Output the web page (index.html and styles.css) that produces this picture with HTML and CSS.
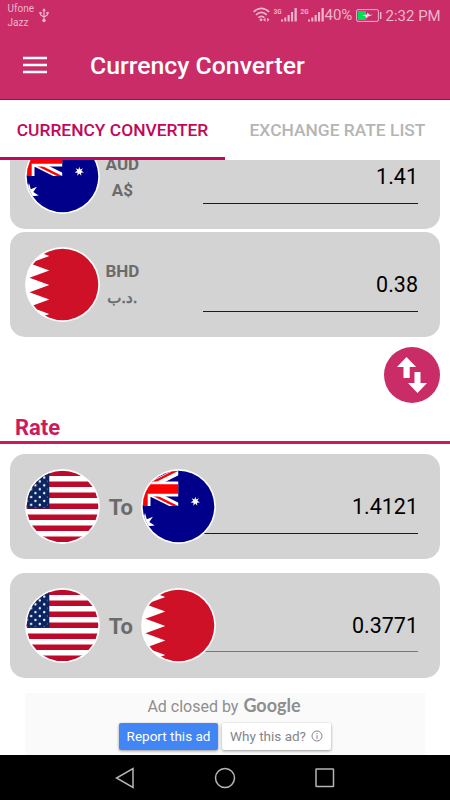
FILE: index.html
```html
<!DOCTYPE html>
<html lang="en">
<head>
    <meta charset="UTF-8">
    <meta name="viewport" content="width=device-width, initial-scale=1.0">
    <title>Currency Converter</title>
    <link rel="stylesheet" href="styles.css">
</head>
<body>
    <!-- flags, used more than once -->
    <svg class="defs" width="0" height="0">
        <defs>
            <clipPath id="round"><circle cx="37.5" cy="37.5" r="35.8"/></clipPath>
            <clipPath id="canton"><rect x="0" y="2" width="37.2" height="35"/></clipPath>
            <pattern id="stars" x="17" y="6.6" width="8.7" height="7.8" patternUnits="userSpaceOnUse">
                <circle cx="2.2" cy="1.95" r="1.15" fill="#fff"/>
                <circle cx="6.55" cy="5.85" r="1.15" fill="#fff"/>
            </pattern>
            <symbol id="us" viewBox="0 0 75 75">
                <circle cx="37.5" cy="37.5" r="37.4" fill="#fff"/>
                <g clip-path="url(#round)">
                    <path d="M0 4.25h75M0 15.25h75M0 26.25h75M0 37.25h75M0 48.25h75M0 59.25h75M0 70.25h75" stroke="#bd0a2b" stroke-width="5.5"/>
                    <rect width="24.3" height="39.6" fill="#0a2560"/>
                    <rect width="22.5" height="39" fill="url(#stars)"/>
                </g>
            </symbol>
            <symbol id="au" viewBox="0 0 75 75">
                <circle cx="37.5" cy="37.5" r="37.4" fill="#fff"/>
                <g clip-path="url(#round)">
                    <rect width="75" height="75" fill="#00008b"/>
                    <g clip-path="url(#canton)">
                        <path d="M2 20L39 1.5M2 20L39 38.5" stroke="#fff" stroke-width="7"/>
                        <path d="M2 18.8L39 .3M2 21.3L39 39.8" stroke="#f00" stroke-width="2.4" transform="translate(0 -.6)"/>
                        <path d="M0 20h38M2 0v38" stroke="#fff" stroke-width="15"/>
                        <path d="M0 20h38M2 0v38" stroke="#f00" stroke-width="9.4"/>
                    </g>
                    <path d="M4.5 43.5l1.8 6.2 6.1-2.6-3.6 5.2 5.4 3.6-6.3.8.8 6.5-4.2-5-4.2 5 .8-6.5-6.3-.8 5.4-3.6-3.6-5.2 6.1 2.6z" fill="#fff" transform="translate(-.5 .6)"/>
                    <path d="M54.3 27.7l.9 2.8 2.7-1.2-1.5 2.5 2.6 1.6-3 .4.3 3-2-2.2-2 2.2.3-3-3-.4 2.6-1.6-1.5-2.5 2.7 1.2z" fill="#fff"/>
                </g>
            </symbol>
            <symbol id="bh" viewBox="0 0 75 75">
                <circle cx="37.5" cy="37.5" r="37.4" fill="#fff"/>
                <path clip-path="url(#round)" d="M75 0H24.3L4.5 1.7 24.3 9 4.5 16.3l19.8 7.2-19.8 7.3L24.3 38 4.5 45.3l19.8 7.2-19.8 7.3L24.3 67 4.5 74.3 24.3 75H75z" fill="#ce1126"/>
            </symbol>
        </defs>
    </svg>

    <header>
        <div class="status">
            <div class="carriers">Ufone<br>Jazz</div>
            <svg class="usb" width="10" height="15" viewBox="0 0 10 15" fill="none" stroke="#eeb5cb" stroke-width="1.2">
                <path d="M5 2v10M1.5 4.5v2.2L5 9.2l3.5-2.5V4.5"/>
                <path d="M5 0L3.2 3h3.6zM.3 4h2.4v1.8H.3zM7.3 4h2.4v1.8H7.3z" fill="#eeb5cb" stroke="none"/>
                <circle cx="5" cy="12.5" r="1.7" fill="#eeb5cb" stroke="none"/>
            </svg>
            <svg class="signals" width="72" height="15" viewBox="0 0 72 15">
                <g fill="none" stroke="#eeb5cb" stroke-width="1.7">
                    <path d="M.6 4.8q7.4-7 15.6 0M3 7.8q5.4-4.7 10.8 0M5.4 10.7q3-2.7 6 0"/>
                </g>
                <circle cx="8" cy="12.8" r="1.4" fill="#eeb5cb"/>
                <path d="M10 12.8l2.5-2v4zM16.5 12.8l-2.5-2v4z" fill="#eeb5cb"/>
                <path d="M28 12.5h2v2h-2zM31.3 10.5h2v4h-2zM34.6 8h2.1v6.500h-2.100zM38 5h2.100v9.500H38zM41.500 1h2.300v13.500h-2.300zM55 12.500h2v2h-2zM58.300 10.500h2v4h-2zM61.600 8h2.100v6.500h-2.100zM65 5h2.100v9.500H65zM68.500 1h2.300v13.500h-2.300z" fill="#eeb5cb"/>
                <text x="20.5" y="7" textLength="8" lengthAdjust="spacingAndGlyphs">3G</text>
                <text x="47.5" y="7" textLength="8" lengthAdjust="spacingAndGlyphs">2G</text>
            </svg>
            <span class="percent">40%</span>
            <svg class="battery" width="26" height="13" viewBox="0 0 26 13">
                <rect x=".6" y=".6" width="21.8" height="11.8" rx="1.5" fill="none" stroke="#eeb5cb"/>
                <rect x="2" y="2" width="8" height="9" fill="#00dc55"/>
                <path d="M6 6l5-.5.5-2 2 2.3H17l-5.500 2-.5 2-1.500-2.300z" fill="#f7dfe8"/>
                <path d="M24.7 3v7" stroke="#eeb5cb" stroke-width="1.5"/>
            </svg>
            <span class="clock">2:32 PM</span>
        </div>
        <div class="toolbar">
            <svg width="24" height="18" viewBox="0 0 24 18"><path d="M0 2h24M0 9h24M0 16h24" stroke="#fff" stroke-width="2.5"/></svg>
            <h1>Currency Converter</h1>
        </div>
    </header>

    <nav>
        <a class="tab active"><span>CURRENCY CONVERTER</span></a>
        <a class="tab"><span>EXCHANGE RATE LIST</span></a>
    </nav>

    <main>
        <div class="card first">
            <svg class="flag"><use href="#au"/></svg>
            <div class="code">AUD<br>A$</div>
            <div class="value">1.41</div>
        </div>
        <div class="card second">
            <svg class="flag"><use href="#bh"/></svg>
            <div class="code">BHD<br><span class="arabic" dir="rtl">.د.ب</span></div>
            <div class="value">0.38</div>
        </div>
        <button class="swap">
            <svg width="30" height="37" viewBox="0 0 30 37" fill="#fff">
                <path d="M9.5 0l9.7 10h-6.5v11H6.5V10H0z"/>
                <path d="M17.5 15h6v11H30l-9.5 10L11 26h6.5z"/>
            </svg>
        </button>
        <h2>Rate</h2>
        <div class="card rate">
            <svg class="flag"><use href="#us"/></svg>
            <div class="to">To</div>
            <svg class="flag target"><use href="#au"/></svg>
            <div class="value">1.4121</div>
        </div>
        <div class="card rate last">
            <svg class="flag"><use href="#us"/></svg>
            <div class="to">To</div>
            <svg class="flag target"><use href="#bh"/></svg>
            <div class="value">0.3771</div>
        </div>
        <div class="ad">
            <div class="closed"><span>Ad closed by</span> <b>Google</b></div>
            <div class="buttons">
                <button class="report">Report this ad</button>
                <button class="why">Why this ad?
                    <svg width="12" height="12" viewBox="0 0 12 12" fill="none" stroke="#85858c"><circle cx="6" cy="6" r="5"/><path d="M6 5.2V9M6 3v1.2"/></svg>
                </button>
            </div>
        </div>
    </main>

    <footer>
        <svg width="20" height="22" viewBox="0 0 20 22"><path d="M18 1.5v19L1.5 11z"/></svg>
        <svg width="22" height="22" viewBox="0 0 22 22"><circle cx="11" cy="11" r="9.5"/></svg>
        <svg width="20" height="20" viewBox="0 0 20 20"><rect x="1" y="1" width="17.5" height="17.5" rx=".5"/></svg>
    </footer>
</body>
</html>
```
FILE: styles.css
```css
* {
    box-sizing: border-box;
}

body {
    margin: 0;
    width: 450px;
    height: 800px;
    overflow: hidden;
    display: flex;
    flex-direction: column;
    background: #fff;
    font-family: Roboto, "Noto Sans", sans-serif;
}

.defs {
    position: absolute;
}

svg {
    flex: none;
}

header {
    height: 100px;
    background: #c92c66;
    border-bottom: 1px solid #c2003f;
    color: #fff;
}

.status {
    display: flex;
    align-items: flex-start;
    height: 32px;
    padding-left: 7.5px;
    color: #eeb5cb;
}

.carriers {
    width: 31px;
    padding-top: 2px;
    font-size: 10px;
    line-height: 14px;
}

.usb {
    margin-top: 8px;
}

.signals {
    margin: 7px 0 0 204px;
}

.signals text {
    font-size: 8px;
    font-weight: 700;
    fill: #eeb5cb;
}

.percent {
    width: 31px;
    margin-top: 6px;
    font-size: 15px;
    line-height: 18px;
}

.battery {
    margin-top: 9px;
}

.clock {
    margin: 7px 0 0 4px;
    font-size: 15px;
    line-height: 18px;
    white-space: nowrap;
}

.toolbar {
    display: flex;
    align-items: center;
    height: 66px;
    padding-left: 23px;
}

h1 {
    margin: 1px 0 0 43px;
    font-size: 24.8px;
    font-weight: 500;
    line-height: 30px;
}

nav {
    display: flex;
    flex: none;
    height: 60px;
    background: #fff;
}

.tab {
    flex: 1;
    display: flex;
    justify-content: center;
    padding-top: 20px;
    border-bottom: 3px solid #fff;
    color: #b5b5b5;
    font-size: 17.4px;
    font-weight: 500;
    line-height: 20px;
}

.active {
    color: #c2085a;
    border-bottom-color: #c2085a;
}

main {
    flex: 1;
    min-height: 0;
    overflow: hidden;
    display: flex;
    flex-direction: column;
}

.card {
    flex: none;
    display: flex;
    align-items: center;
    height: 105px;
    margin: 0 10.4px;
    padding: 0 21.6px 0 15px;
    border-radius: 15px;
    background: #d3d3d3;
}

.first {
    margin-top: -36px;
}

.second {
    margin-top: 3px;
}

.flag {
    width: 75px;
    height: 75px;
}

.code {
    width: 44px;
    color: #6b6b6b;
    font-size: 17px;
    font-weight: 700;
    line-height: 26px;
    text-align: center;
}

.arabic {
    font-family: "DejaVu Sans", sans-serif;
    font-size: 15px;
    font-weight: 400;
    -webkit-text-stroke: 0.6px #6b6b6b;
}

.value {
    flex: 1;
    height: 40px;
    margin: 14px 0 0 59px;
    border-bottom: 1px solid #1c1c1c;
    font-size: 21.5px;
    line-height: 26px;
    text-align: right;
}

.swap {
    align-self: flex-end;
    flex: none;
    display: flex;
    align-items: center;
    justify-content: center;
    width: 56px;
    height: 56px;
    margin: 10px 10px 0 0;
    padding: 0;
    border: 0;
    border-radius: 50%;
    background: #c92c66;
}

h2 {
    flex: none;
    height: 41px;
    margin: 0;
    padding: 12px 0 0 15px;
    border-bottom: 3px solid #cc1a5c;
    color: #cc1a5c;
    font-size: 22px;
    font-weight: 700;
    line-height: 26px;
}

.rate {
    margin-top: 10px;
}

.last {
    margin-top: 13.5px;
}

.to {
    width: 41px;
    padding-top: 2px;
    color: #6b6b6b;
    font-size: 22px;
    font-weight: 700;
    text-align: center;
}

.rate .value {
    margin-left: -13px;
    margin-top: 15px;
}

.target {
    z-index: 1;
}

.last .value {
    margin-top: 14px;
    border-color: #777;
    line-height: 27px;
}

.ad {
    flex: none;
    width: 400px;
    height: 62px;
    margin: 15px 0 0 25px;
    background: #fafafa;
}

.closed {
    height: 25px;
    padding: 1px 2px 0 0;
    color: #8e8e8e;
    font-size: 16px;
    line-height: 22px;
    text-align: center;
}

.closed b {
    margin-left: 1px;
    font-family: Lato, sans-serif;
    font-size: 18px;
    font-weight: 700;
}

.buttons {
    display: flex;
    gap: 4px;
    padding: 5px 0 0 94px;
}

.buttons button {
    display: flex;
    align-items: center;
    justify-content: center;
    height: 27px;
    padding: 0;
    border: 0;
    border-radius: 2px;
    box-shadow: 0 1px 3px rgba(0, 0, 0, 0.4);
    font-family: inherit;
    font-size: 13.5px;
    white-space: nowrap;
}

.buttons .report {
    width: 99px;
    background: #4285f4;
    color: #fff;
}

.buttons .why {
    width: 109px;
    gap: 5px;
    background: #fff;
    color: #85858c;
}

footer {
    flex: none;
    display: flex;
    align-items: center;
    justify-content: space-between;
    height: 45px;
    padding: 0 115px;
    background: #000;
}

footer svg {
    fill: none;
    stroke: #b5b5b5;
    stroke-width: 1.5;
}
```
